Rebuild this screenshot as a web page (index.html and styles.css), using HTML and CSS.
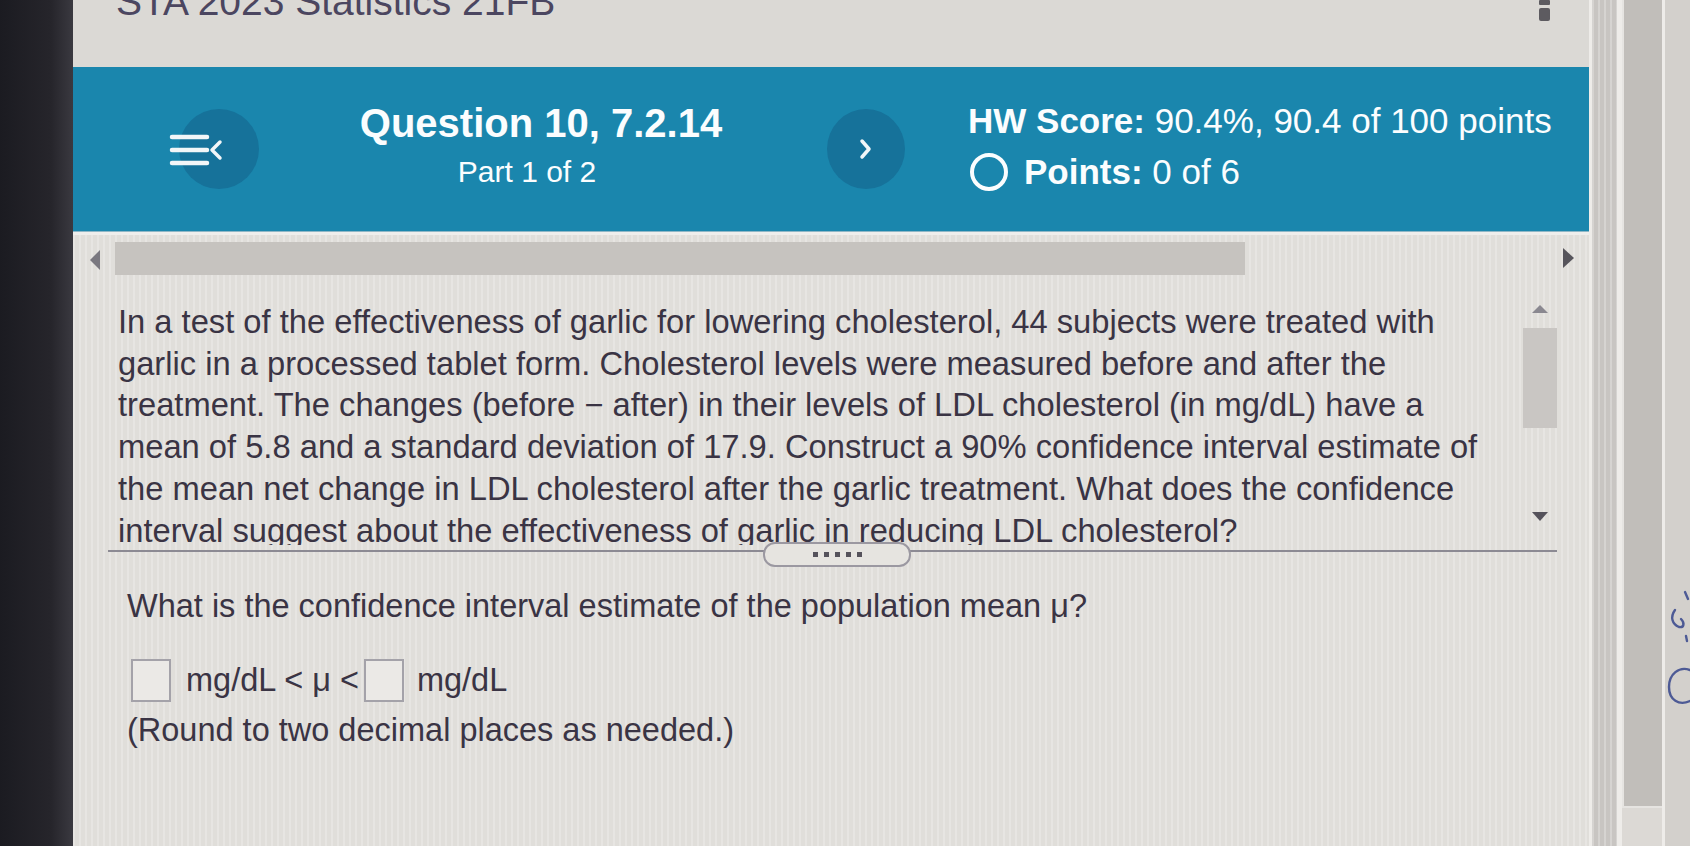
FILE: index.html
```html
<!DOCTYPE html>
<html lang="en">
<head>
<meta charset="utf-8">
<title>Question 10, 7.2.14</title>
<link rel="stylesheet" href="styles.css">
</head>
<body>
<div class="bezel"></div>
<div class="page">
  <div class="topbar">
    <div class="course">STA 2023 Statistics 21FB</div>
    <div class="grip"><span class="grip-a"></span><span class="grip-b"></span></div>
  </div>
  <div class="banner">
    <div class="menu-btn">
      <svg class="menu-icon" width="60" height="34" viewBox="0 0 60 34">
        <g stroke="#f2f6f8" stroke-width="4.5" stroke-linecap="round" fill="none">
          <line x1="3" y1="4" x2="38" y2="4"/>
          <line x1="3" y1="17" x2="38" y2="17"/>
          <line x1="3" y1="30" x2="38" y2="30"/>
          <polyline points="51,9 43,17 51,25" stroke-width="3.5" stroke-linejoin="round"/>
        </g>
      </svg>
    </div>
    <div class="title-block">
      <div class="q-title">Question 10, 7.2.14</div>
      <div class="q-part">Part 1 of 2</div>
    </div>
    <div class="next-btn">
      <svg width="16" height="24" viewBox="0 0 16 24">
        <polyline points="4,4 11,12 4,20" stroke="#f2f6f8" stroke-width="3.5" fill="none" stroke-linecap="round" stroke-linejoin="round"/>
      </svg>
    </div>
    <div class="score-block">
      <div class="hw"><b>HW Score:</b> 90.4%, 90.4 of 100 points</div>
      <div class="pts"><span class="ring"></span><span><b>Points:</b> 0 of 6</span></div>
    </div>
  </div>
  <div class="hscroll">
    <span class="arrow-left"></span>
    <span class="hthumb"></span>
    <span class="arrow-right"></span>
  </div>
  <div class="passage">
    <div class="passage-text">In a test of the effectiveness of garlic for lowering cholesterol, 44 subjects were treated with<br>garlic in a processed tablet form. Cholesterol levels were measured before and after the<br>treatment. The changes (before − after) in their levels of LDL cholesterol (in mg/dL) have a<br>mean of 5.8 and a standard deviation of 17.9. Construct a 90% confidence interval estimate of<br>the mean net change in LDL cholesterol after the garlic treatment. What does the confidence<br>interval suggest about the effectiveness of garlic in reducing LDL cholesterol?</div>
    <div class="vscroll">
      <span class="arrow-up"></span>
      <span class="vthumb"></span>
      <span class="arrow-down"></span>
    </div>
  </div>
  <div class="divider">
    <span class="pill"><i></i><i></i><i></i><i></i><i></i></span>
  </div>
  <div class="answer">
    <div class="ask">What is the confidence interval estimate of the population mean μ?</div>
    <div class="inputs">
      <span class="box"></span>
      <span class="unit">mg/dL &lt; μ &lt;</span>
      <span class="box box2"></span>
      <span class="unit unit2">mg/dL</span>
    </div>
    <div class="hint">(Round to two decimal places as needed.)</div>
  </div>
</div>
<div class="chrome">
  <div class="c-line"></div>
  <div class="c-band"></div>
  <div class="c-line wide"></div>
  <div class="c-strip"><div class="c-strip-bar"></div></div>
  <div class="c-line"></div>
  <div class="c-edge">
    <svg class="marks" width="26" height="150" viewBox="0 0 26 150">
      <g stroke="#4d5a95" stroke-width="2.4" fill="none" stroke-linecap="round">
        <path d="M20 2 L23 9"/>
        <path d="M10 20 C5 27 7 34 14 37 C19 38 20 33 16 29"/>
        <path d="M21 46 L22 51"/>
        <path d="M25 80 C14 76 4 84 4 97 C4 110 14 116 25 111"/>
      </g>
    </svg>
  </div>
</div>
</body>
</html>
```
FILE: styles.css
```css
* { box-sizing: border-box; }
html, body {
  margin: 0;
  height: 846px;
  overflow: hidden;
}
body {
  display: flex;
  background: #d6d3cf;
  font-family: "Liberation Sans", Arial, sans-serif;
  color: #3a3444;
}
.bezel {
  flex: none;
  width: 73px;
  background: linear-gradient(90deg, #1b1b21 0%, #26252b 70%, #3a3940 100%);
}
.page {
  flex: none;
  width: 1516px;
  display: flex;
  flex-direction: column;
  background-color: #e0deda;
  background-image: repeating-linear-gradient(90deg, rgba(255,255,255,0.22) 0 2px, rgba(0,0,0,0) 2px 6px);
}
.topbar {
  height: 67px;
  display: flex;
  overflow: hidden;
  padding-left: 43px;
  background-color: #dbd9d5;
}
.course {
  font-size: 39px;
  line-height: 1;
  margin-top: -18px;
  color: #4b4660;
  white-space: nowrap;
}
.grip {
  margin-left: auto;
  margin-right: 39px;
  width: 11px;
  display: flex;
  flex-direction: column;
  gap: 3px;
}
.grip-a { height: 5px; background: #5d5b60; border-radius: 1px; }
.grip-b { height: 13px; background: #5d5b60; border-radius: 2px; }

.banner {
  height: 165px;
  background: #1a86ad;
  display: flex;
  align-items: center;
  padding-left: 106px;
  color: #fbfdfe;
  border-bottom: 1px solid #8fb7c6;
}
.menu-btn {
  flex: none;
  width: 80px;
  height: 80px;
  border-radius: 50%;
  background: #16729a;
  display: flex;
  align-items: center;
}
.menu-icon {
  margin-left: -10px;
  margin-top: 2px;
}
.title-block {
  flex: none;
  width: 366px;
  margin-left: 99px;
  align-self: flex-start;
  margin-top: 33px;
  display: flex;
  flex-direction: column;
  align-items: center;
}
.q-title {
  font-size: 40px;
  font-weight: bold;
  line-height: 46px;
  white-space: nowrap;
}
.q-part {
  font-size: 30px;
  line-height: 34px;
  margin-top: 9px;
  margin-right: 28px;
}
.next-btn {
  flex: none;
  margin-left: 103px;
  width: 78px;
  height: 80px;
  border-radius: 50%;
  background: #16729a;
  display: flex;
  align-items: center;
  justify-content: center;
}
.score-block {
  flex: none;
  margin-left: 63px;
  align-self: flex-start;
  margin-top: 34px;
  font-size: 35px;
  line-height: 40px;
  white-space: nowrap;
}
.pts {
  margin-top: 11px;
  display: flex;
  align-items: center;
  gap: 16px;
  padding-left: 2px;
}
.ring {
  width: 38px;
  height: 38px;
  border: 4px solid #fbfdfe;
  border-radius: 50%;
}

.hscroll {
  height: 44px;
  display: flex;
  align-items: flex-start;
  padding-top: 7px;
  border-top: 3px solid #efeeec;
}
.arrow-left {
  margin-left: 17px;
  margin-top: 8px;
  width: 0; height: 0;
  border-top: 10px solid transparent;
  border-bottom: 10px solid transparent;
  border-right: 10px solid #7a7880;
}
.hthumb {
  margin-left: 15px;
  width: 1130px;
  height: 33px;
  background: #c6c3bf;
}
.arrow-right {
  margin-left: 318px;
  margin-top: 6px;
  width: 0; height: 0;
  border-top: 10px solid transparent;
  border-bottom: 10px solid transparent;
  border-left: 11px solid #57555c;
}

.passage {
  height: 269px;
  display: flex;
  overflow: hidden;
}
.passage-text {
  flex: 1;
  padding-left: 45px;
  padding-top: 25px;
  font-size: 32.7px;
  line-height: 41.7px;
  white-space: nowrap;
}
.vscroll {
  flex: none;
  width: 34px;
  margin-right: 32px;
  display: flex;
  flex-direction: column;
  align-items: center;
}
.arrow-up {
  margin-top: 29px;
  width: 0; height: 0;
  border-left: 8px solid transparent;
  border-right: 8px solid transparent;
  border-bottom: 8px solid #8a8890;
}
.vthumb {
  margin-top: 15px;
  width: 34px;
  height: 100px;
  background: #c9c6c3;
}
.arrow-down {
  margin-top: 84px;
  width: 0; height: 0;
  border-left: 8px solid transparent;
  border-right: 8px solid transparent;
  border-top: 9px solid #55525b;
}

.divider {
  position: relative;
  margin-left: 35px;
  margin-right: 32px;
  margin-top: 5px;
  height: 2px;
  background: #8c8a93;
}
.pill {
  position: absolute;
  left: 655px;
  top: -8px;
  width: 148px;
  height: 25px;
  border: 2px solid #9b98a1;
  border-radius: 12px;
  background: #e6e4e0;
  display: flex;
  align-items: center;
  justify-content: center;
  gap: 6px;
}
.pill i {
  width: 5px;
  height: 5px;
  background: #55525b;
}

.answer {
  padding-left: 54px;
  padding-top: 33px;
  font-size: 32.5px;
}
.ask {
  line-height: 42px;
  white-space: nowrap;
}
.inputs {
  margin-top: 32px;
  height: 43px;
  display: flex;
  align-items: center;
}
.box {
  width: 40px;
  height: 43px;
  margin-left: 4px;
  border: 2px solid #a4a2a9;
  background: #ebe9e6;
}
.unit {
  margin-left: 15px;
  font-size: 32.5px;
  white-space: nowrap;
}
.box2 { margin-left: 5px; }
.unit2 { margin-left: 13px; }
.hint {
  margin-top: 7px;
  line-height: 42px;
  white-space: nowrap;
}

.chrome {
  flex: 1;
  display: flex;
  background: #cfccc8;
}
.c-line { width: 3px; background: #eeece9; }
.c-line.wide { width: 5px; }
.c-band {
  width: 25px;
  background-color: #c8c5c2;
  background-image: repeating-linear-gradient(90deg, rgba(255,255,255,0.25) 0 2px, rgba(0,0,0,0) 2px 6px);
}
.c-strip {
  width: 40px;
  background: #dcd9d5;
  display: flex;
  flex-direction: column;
}
.c-strip-bar {
  height: 808px;
  background-color: #c1beba;
  border-left: 2px solid #e6e4e1;
  border-bottom: 2px solid #e6e4e1;
}
.c-edge {
  flex: 1;
  background: #d3d0cc;
  display: flex;
  flex-direction: column;
  padding-top: 590px;
}
.marks { flex: none; }
```
